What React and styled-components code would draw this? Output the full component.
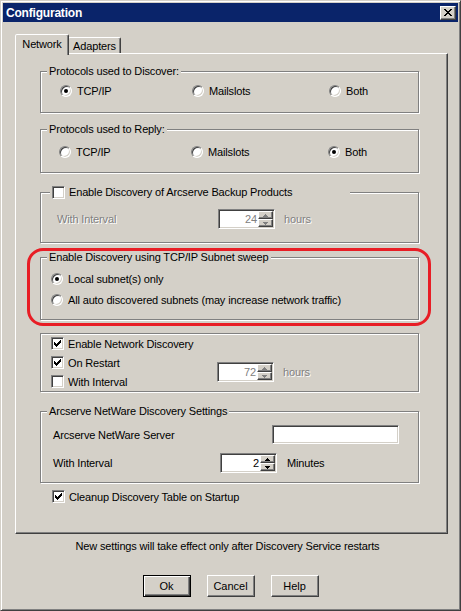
import React from "react";
import styled, { createGlobalStyle, css } from "styled-components";

const FACE = "#d4d0c8";
const SHADOW = "#808080";
const DARK = "#404040";

const GlobalStyle = createGlobalStyle`
  html, body {
    margin: 0;
    padding: 0;
    background: ${FACE};
  }
  body {
    font-family: "Liberation Sans", Arial, sans-serif;
    font-size: 11px;
    letter-spacing: -0.15px;
    color: #000;
  }
  * {
    box-sizing: border-box;
  }
`;

const Window = styled.div`
  width: 461px;
  height: 611px;
  background: ${FACE};
  border: 1px solid;
  border-color: ${FACE} ${DARK} ${DARK} ${FACE};
  box-shadow: inset 1px 1px #fff, inset -1px -1px ${SHADOW};
  padding: 2px;
  display: flex;
  flex-direction: column;
`;

const TitleBar = styled.div`
  height: 19px;
  background: #0a246a;
  color: #fff;
  display: flex;
  align-items: center;
  justify-content: space-between;
  padding: 0 2px 0 3px;
  font-weight: bold;
  font-size: 12px;
  letter-spacing: -0.2px;
`;

const CloseButton = styled.div`
  width: 16px;
  height: 14px;
  background: ${FACE};
  border: 1px solid;
  border-color: #fff ${DARK} ${DARK} #fff;
  box-shadow: inset -1px -1px ${SHADOW};
  display: flex;
  align-items: center;
  justify-content: center;
  padding-right: 1px;
`;

const Content = styled.div`
  padding: 12px 0 0 12px;
  display: flex;
  flex-direction: column;
`;

const TabRow = styled.div`
  display: flex;
  align-items: flex-end;
  height: 19px;
`;

const Tab = styled.div`
  position: relative;
  background: ${FACE};
  border: 1px solid;
  border-bottom: none;
  border-color: #fff ${DARK} transparent #fff;
  box-shadow: inset -1px 0 ${SHADOW};
  border-radius: 2px 2px 0 0;
  display: flex;
  align-items: center;
  justify-content: center;
  ${(p) =>
    p.$active
      ? css`
          width: 54px;
          height: 21px;
          margin-bottom: -2px;
          padding-bottom: 2px;
          z-index: 2;
        `
      : css`
          width: 53px;
          height: 16px;
          margin-left: -1px;
        `}
`;

const TabPanel = styled.div`
  width: 433px;
  border: 1px solid;
  border-color: #fff ${DARK} ${DARK} #fff;
  box-shadow: inset -1px -1px ${SHADOW};
  padding: 11px 28px 27px 24px;
  display: flex;
  flex-direction: column;
`;

const Group = styled.fieldset`
  margin: ${(p) => p.$mt || 0}px 0 0 0;
  min-width: 0;
  border: 1px solid ${SHADOW};
  box-shadow: inset 1px 1px #fff, 1px 1px #fff;
  padding: ${(p) => p.$pt || 0}px 0 ${(p) => p.$pb || 0}px 0;
`;

const GroupBody = styled.div`
  padding-left: ${(p) => p.$pl}px;
`;

const Legend = styled.legend`
  margin-left: ${(p) => p.$ml || 6}px;
  padding: 0 2px;
  line-height: 13px;
  height: 13px;
  background: ${FACE};
  display: flex;
  align-items: center;
  ${(p) => p.$width && css`width: ${p.$width}px;`}
`;

const RadioGrid = styled.div`
  display: grid;
  grid-template-columns: 132px 137px 1fr;
  height: 20px;
  align-items: center;
`;

const Option = styled.label`
  display: flex;
  align-items: center;
  gap: ${(p) => p.$gap || 5}px;
  height: ${(p) => p.$h || 20}px;
  white-space: nowrap;
`;

const RadioCircle = styled.span`
  position: relative;
  flex: none;
  width: 12px;
  height: 12px;
  border-radius: 50%;
  background: #fff;
  border: 1px solid;
  border-color: ${SHADOW} #fff #fff ${SHADOW};
  box-shadow: inset 1px 1px ${DARK}, inset -1px -1px ${FACE};
  &::after {
    content: "";
    display: ${(p) => (p.$checked ? "block" : "none")};
    position: absolute;
    left: 3px;
    top: 3px;
    width: 4px;
    height: 4px;
    border-radius: 50%;
    background: #000;
  }
`;

const CheckBox = styled.span`
  flex: none;
  width: 13px;
  height: 13px;
  background: #fff;
  border: 1px solid;
  border-color: ${SHADOW} #fff #fff ${SHADOW};
  box-shadow: inset 1px 1px ${DARK}, inset -1px -1px ${FACE};
  display: flex;
  align-items: center;
  justify-content: center;
`;

const Text = styled.span`
  white-space: nowrap;
  ${(p) =>
    p.$disabled &&
    css`
      color: ${SHADOW};
      text-shadow: 1px 1px #fff;
    `}
`;

const FieldRow = styled.div`
  display: flex;
  align-items: center;
  height: ${(p) => p.$h || 20}px;
  margin-top: ${(p) => p.$mt || 0}px;
`;

const FieldLabel = styled(Text)`
  width: ${(p) => p.$w}px;
  flex: none;
`;

const Unit = styled(Text)`
  margin-left: ${(p) => p.$ml || 9}px;
`;

const Sunken = styled.div`
  background: #fff;
  border: 1px solid;
  border-color: ${SHADOW} #fff #fff ${SHADOW};
  box-shadow: inset 1px 1px ${DARK}, inset -1px -1px ${FACE};
`;

const SpinField = styled(Sunken)`
  width: 57px;
  height: 20px;
  padding: 1px;
  display: flex;
`;

const SpinValue = styled.span`
  flex: 1;
  text-align: right;
  line-height: 16px;
  padding-right: 1px;
  color: ${(p) => (p.$disabled ? SHADOW : "#000")};
`;

const SpinButtons = styled.div`
  width: 15px;
  display: flex;
  flex-direction: column;
`;

const SpinButton = styled.div`
  flex: 1;
  background: ${FACE};
  border: 1px solid;
  border-color: #fff ${DARK} ${DARK} #fff;
  box-shadow: inset -1px -1px ${SHADOW};
  display: flex;
  align-items: center;
  justify-content: center;
  padding-right: 1px;
`;

const TextBox = styled(Sunken)`
  width: 127px;
  height: 19px;
`;

const SplitRow = styled.div`
  display: flex;
`;

const CheckColumn = styled.div`
  width: 166px;
  display: flex;
  flex-direction: column;
`;

const SpinCluster = styled.div`
  align-self: flex-end;
  margin-bottom: 9px;
  display: flex;
  align-items: center;
`;

const HighlightWrap = styled.div`
  position: relative;
  margin-top: 8px;
`;

const Highlight = styled.div`
  position: absolute;
  top: -3px;
  left: -13px;
  right: -12px;
  bottom: -6px;
  border: 3px solid #e81d25;
  border-radius: 16px;
  pointer-events: none;
`;

const StandaloneRow = styled.div`
  margin-top: 4px;
  padding-left: 12px;
`;

const Note = styled.div`
  width: 433px;
  text-align: center;
  line-height: 13px;
  margin-top: 6px;
  padding-right: 8px;
`;

const ButtonRow = styled.div`
  width: 433px;
  display: flex;
  justify-content: center;
  gap: 16px;
  margin-top: 22px;
  padding-right: 2px;
`;

const Button = styled.button`
  width: 48px;
  height: 22px;
  padding: 0;
  font: inherit;
  color: #000;
  background: ${FACE};
  border: 1px solid;
  border-color: #fff ${DARK} ${DARK} #fff;
  box-shadow: inset -1px -1px ${SHADOW};
  ${(p) =>
    p.$default &&
    css`
      border-color: #000;
      box-shadow: inset 1px 1px #fff, inset -1px -1px ${DARK},
        inset -2px -2px ${SHADOW};
    `}
`;

const CheckMark = () => (
  <svg width="7" height="7" viewBox="0 0 7 7" shapeRendering="crispEdges">
    <path
      d="M0 2h1v3H0zM1 3h1v3H1zM2 4h1v3H2zM3 3h1v3H3zM4 2h1v3H4zM5 1h1v3H5zM6 0h1v3H6z"
      fill="#000"
    />
  </svg>
);

const CloseGlyph = () => (
  <svg width="8" height="7" viewBox="0 0 8 7" shapeRendering="crispEdges">
    <path
      d="M0 0h2v1H0zM6 0h2v1H6zM1 1h2v1H1zM5 1h2v1H5zM2 2h4v1H2zM3 3h2v1H3zM2 4h4v1H2zM1 5h2v1H1zM5 5h2v1H5zM0 6h2v1H0zM6 6h2v1H6z"
      fill="#000"
    />
  </svg>
);

const Arrow = ({ down, color }) => (
  <svg width="5" height="3" viewBox="0 0 5 3" shapeRendering="crispEdges">
    <path
      d={down ? "M0 0h5v1H4v1H3v1H2V2H1V1H0z" : "M2 0h1v1h1v1h1v1H0V2h1V1h1z"}
      fill={color}
    />
  </svg>
);

const Radio = ({ label, checked, h }) => (
  <Option $h={h}>
    <RadioCircle $checked={checked} />
    <Text>{label}</Text>
  </Option>
);

const Check = ({ label, checked, h }) => (
  <Option $gap={4} $h={h}>
    <CheckBox>{checked && <CheckMark />}</CheckBox>
    <Text>{label}</Text>
  </Option>
);

const Spin = ({ value, disabled }) => {
  const c = disabled ? SHADOW : "#000";
  return (
    <SpinField>
      <SpinValue $disabled={disabled}>{value}</SpinValue>
      <SpinButtons>
        <SpinButton>
          <Arrow color={c} />
        </SpinButton>
        <SpinButton>
          <Arrow down color={c} />
        </SpinButton>
      </SpinButtons>
    </SpinField>
  );
};

const ProtocolGroup = ({ title, selected, mt, pt, pb, pl }) => (
  <Group $mt={mt} $pt={pt} $pb={pb}>
    <Legend>{title}</Legend>
    <GroupBody $pl={pl}>
      <RadioGrid>
        {["TCP/IP", "Mailslots", "Both"].map((o) => (
          <Radio key={o} label={o} checked={o === selected} />
        ))}
      </RadioGrid>
    </GroupBody>
  </Group>
);

export default function App() {
  return (
    <>
      <GlobalStyle />
      <Window>
        <TitleBar>
          <span>Configuration</span>
          <CloseButton>
            <CloseGlyph />
          </CloseButton>
        </TitleBar>
        <Content>
          <TabRow>
            <Tab $active>Network</Tab>
            <Tab>Adapters</Tab>
          </TabRow>
          <TabPanel>
            <ProtocolGroup
              title="Protocols used to Discover:"
              selected="TCP/IP"
              pt={3}
              pb={11}
              pl={19}
            />
            <ProtocolGroup
              title="Protocols used to Reply:"
              selected="Both"
              mt={10}
              pt={6}
              pb={10}
              pl={18}
            />

            <Group $mt={13} $pt={10} $pb={13}>
              <Legend $ml={9} $width={300}>
                <Check label="Enable Discovery of Arcserve Backup Products" h={13} />
              </Legend>
              <GroupBody $pl={16}>
                <FieldRow>
                  <FieldLabel $w={161} $disabled>
                    With Interval
                  </FieldLabel>
                  <Spin value="24" disabled />
                  <Unit $disabled>hours</Unit>
                </FieldRow>
              </GroupBody>
            </Group>

            <HighlightWrap>
              <Group $pt={4} $pb={9}>
                <Legend>Enable Discovery using TCP/IP Subnet sweep</Legend>
                <GroupBody $pl={10}>
                  <Radio label="Local subnet(s) only" checked h={21} />
                  <Radio
                    label="All auto discovered subnets (may increase network traffic)"
                    h={21}
                  />
                </GroupBody>
              </Group>
              <Highlight />
            </HighlightWrap>

            <Group $mt={13}>
              <GroupBody $pl={10}>
                <SplitRow>
                  <CheckColumn>
                    <Check label="Enable Network Discovery" checked h={19} />
                    <Check label="On Restart" checked h={19} />
                    <Check label="With Interval" h={19} />
                  </CheckColumn>
                  <SpinCluster>
                    <Spin value="72" disabled />
                    <Unit $disabled>hours</Unit>
                  </SpinCluster>
                </SplitRow>
              </GroupBody>
            </Group>

            <Group $mt={13} $pt={7} $pb={9}>
              <Legend>Arcserve NetWare Discovery Settings</Legend>
              <GroupBody $pl={12}>
                <FieldRow $h={19}>
                  <FieldLabel $w={219}>Arcserve NetWare Server</FieldLabel>
                  <TextBox />
                </FieldRow>
                <FieldRow $mt={9}>
                  <FieldLabel $w={167}>With Interval</FieldLabel>
                  <Spin value="2" />
                  <Unit $ml={10}>Minutes</Unit>
                </FieldRow>
              </GroupBody>
            </Group>

            <StandaloneRow>
              <Check label="Cleanup Discovery Table on Startup" checked h={19} />
            </StandaloneRow>
          </TabPanel>

          <Note>New settings will take effect only after Discovery Service restarts</Note>

          <ButtonRow>
            <Button $default>Ok</Button>
            <Button>Cancel</Button>
            <Button>Help</Button>
          </ButtonRow>
        </Content>
      </Window>
    </>
  );
}
